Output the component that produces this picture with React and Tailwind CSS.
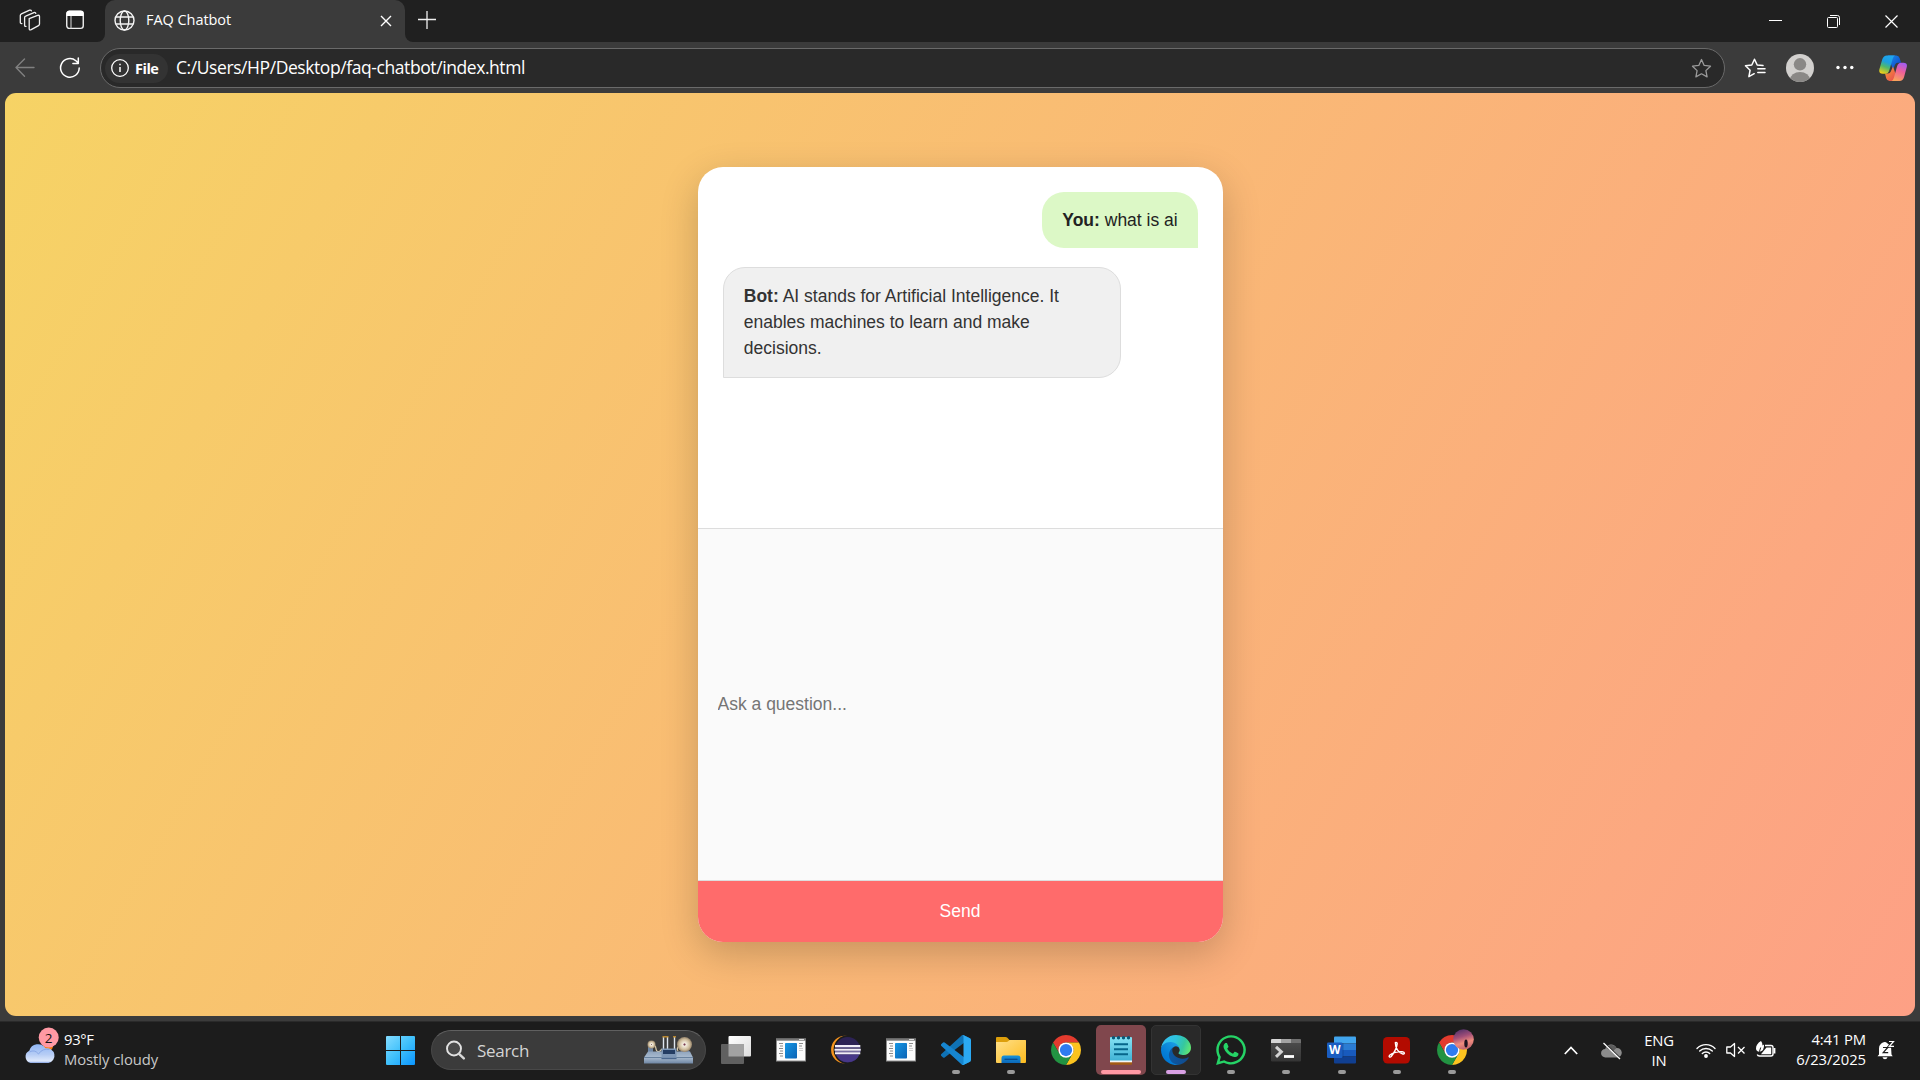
import React from "react";
import { FaWhatsapp } from "react-icons/fa";

const UI = "font-['Open_Sans','Noto_Sans',sans-serif]";

/* ---------- Browser chrome ---------- */

function WorkspacesIcon() {
  return (
    <svg width="22" height="22" viewBox="0 0 22 22" fill="none" stroke="#f0f0f0" strokeWidth="1.3" strokeLinejoin="round" strokeLinecap="round">
      <path d="M10.2 9.6 18.6 6.4q1.9-.6 1.9 1.1v7.6q0 1-1 1.5l-7.3 4q-2 .9-2-.9v-8.6q0-1.100 0-1.500z" />
      <path d="M7 17.300q-1.400.300-1.400-1.100V8.700q0-1.200 1.100-1.600l8.200-3.500q1.600-.5 1.900.8" />
      <path d="M2.900 14.600q-1.600.100-1.600-1.200V6.500q0-1.200 1.100-1.700L10.600 1.200q1.500-.4 1.800.7" />
    </svg>
  );
}

function TabActionsIcon() {
  return (
    <svg width="18" height="20" viewBox="0 0 18 20" fill="none">
      <rect x=".75" y="1.200" width="16.500" height="17.200" rx="2.600" stroke="#f0f0f0" strokeWidth="1.400" />
      <path d="M.5 6V3.300Q.5.700 3.200.700h11.600q2.700 0 2.700 2.600V6z" fill="#fff" />
      <path d="M5 6v12.300" stroke="#bdbdbd" strokeWidth="1.200" />
    </svg>
  );
}

function GlobeIcon() {
  return (
    <svg width="21" height="21" viewBox="0 0 21 21" fill="none" stroke="#f4f4f4" strokeWidth="1.400">
      <circle cx="10.500" cy="10.500" r="9.500" />
      <ellipse cx="10.500" cy="10.500" rx="4.300" ry="9.500" />
      <path d="M1.800 7h17.400M1.800 14h17.400" />
    </svg>
  );
}

function TitleBar() {
  return (
    <div className="flex h-[42px] bg-[#202020]">
      <div className="flex w-[105px] items-start bg-[#3b3b3b]">
        <div className="flex h-[42px] w-full items-start rounded-br-[8px] bg-[#202020] pl-[19px] pt-[9px]">
          <WorkspacesIcon />
          <div className="pl-[25px] pt-[1px]"><TabActionsIcon /></div>
        </div>
      </div>
      <div className="flex w-[300px] bg-[#202020]">
        <div className="flex h-[42px] w-full items-start rounded-t-[10px] bg-[#3b3b3b] pl-[8.500px] pr-[13.500px]">
          <div className="pt-[10px]"><GlobeIcon /></div>
          <span className="ml-[11.500px] mt-[9px] text-[14.500px] leading-[21px] tracking-[-0.05px] text-white">FAQ Chatbot</span>
          <svg className="ml-auto mt-[15px]" width="12" height="12" viewBox="0 0 12 12" stroke="#fff" strokeWidth="1.400"><path d="M1 1l10 10M11 1 1 11" /></svg>
        </div>
      </div>
      <div className="flex flex-1 bg-[#3b3b3b]">
        <div className="flex h-[42px] w-full items-start rounded-bl-[8px] bg-[#202020]">
          <svg className="ml-[13px] mt-[11px]" width="18" height="18" viewBox="0 0 18 18" stroke="#f0f0f0" strokeWidth="1.300"><path d="M9 0v18M0 8.500h18" /></svg>
          <svg className="ml-auto mt-[14px]" width="13" height="14" viewBox="0 0 13 14" stroke="#fff" strokeWidth="1"><path d="M0 6.500h13" /></svg>
          <svg className="ml-[45px] mt-[15px]" width="13" height="13" viewBox="0 0 13 13" fill="none" stroke="#fff" strokeWidth="1">
            <rect x=".5" y="2.500" width="10" height="10" rx="1" /><path d="M3 .5h7.500q2 0 2 2V10" />
          </svg>
          <svg className="ml-[45px] mr-[22px] mt-[15px]" width="13" height="13" viewBox="0 0 13 13" stroke="#fff" strokeWidth="1.200"><path d="M.5.5l12 12M12.500.5l-12 12" /></svg>
        </div>
      </div>
    </div>
  );
}

function Copilot() {
  return (
    <svg width="28" height="27" viewBox="0 0 28 27">
      <defs>
        <linearGradient id="cpA" x1=".6" y1="0" x2=".25" y2="1"><stop offset="0" stopColor="#1fa5ee" /><stop offset=".35" stopColor="#1c9fe0" /><stop offset=".62" stopColor="#4fb86a" /><stop offset="1" stopColor="#f4cf16" /></linearGradient>
        <linearGradient id="cpB" x1=".7" y1="0" x2=".35" y2="1"><stop offset="0" stopColor="#a35cf0" /><stop offset=".45" stopColor="#ef5f9a" /><stop offset="1" stopColor="#f9a45a" /></linearGradient>
        <linearGradient id="cpC" x1="0" y1="0" x2="1" y2="1"><stop offset="0" stopColor="#1c8eea" /><stop offset="1" stopColor="#0a3bc4" /></linearGradient>
        <linearGradient id="cpD" x1="0" y1="0" x2="1" y2="1"><stop offset="0" stopColor="#f7a032" /><stop offset="1" stopColor="#e53f55" /></linearGradient>
      </defs>
      <path d="M9 .5h8.200q2.700 0 3.500 2.700l1.300 4.500h-3.200q-2 0-2.800 2l-2 5z" fill="url(#cpC)" />
      <path d="M19 26H10.500Q8 26 7.200 23.300L6 18.600h3q2.100 0 2.800-2l2.200-5z" fill="url(#cpD)" />
      <path d="M8 .5h8q-1.500.5-2.300 3.200l-3.400 11.500q-1 3.600-4 3.600H3.700q-4.300 0-3.300-4.500L3.300 4.300Q4.500.5 8 .5z" fill="url(#cpA)" />
      <path d="M20.500 26h-8q1.600-.5 2.400-3.200l3.200-11.500q1-3.500 4-3.500h2.400q4.300 0 3.200 4.500l-2.700 10Q24 26 20.500 26z" fill="url(#cpB)" />
    </svg>
  );
}

const STAR = "M10.500 1.500l2.700 5.900 6.300.8-4.600 4.400 1.200 6.300-5.600-3.100-5.600 3.100 1.200-6.300L1.500 8.200l6.300-.8z";

function Toolbar() {
  return (
    <div className="flex h-[51px] items-start bg-[#3b3b3b] pt-[6px]">
      <svg className="ml-[15px] mt-[10px]" width="20" height="20" viewBox="0 0 20 20" fill="none" stroke="#808080" strokeWidth="1.400" strokeLinecap="round" strokeLinejoin="round"><path d="M19 9.500H1M9.500 1 1 9.500l8.500 8.700" /></svg>
      <svg className="ml-[24px] mt-[9px]" width="22" height="22" viewBox="0 0 22 22" fill="none" stroke="#fff" strokeWidth="1.500" strokeLinecap="round" strokeLinejoin="round"><path d="M20.200 11a9.300 9.300 0 1 1-3.300-7.200L19.200 6M19.300 1v5.400h-5.400" /></svg>
      <div className="ml-[19px] flex h-[40px] w-[1625px] items-center rounded-full border border-[#6a6a6a] bg-[#292929] pl-[4px] pr-[12.500px]">
        <div className="flex h-[29px] w-[63px] items-center rounded-full bg-[#333333] pl-[6px]">
          <svg width="18" height="18" viewBox="0 0 18 18" fill="none" stroke="#fff" strokeWidth="1.300"><circle cx="9" cy="9" r="8.300" /><path d="M9 8v5M9 4.800v1.500" strokeWidth="1.500" /></svg>
          <span className="ml-[6px] mt-[1px] text-[14.500px] font-bold leading-[20px] tracking-[-0.5px] text-white">File</span>
        </div>
        <span className="ml-[8px] mt-[-2px] text-[17.500px] leading-[24px] tracking-[-0.42px] text-white">C:/Users/HP/Desktop/faq-chatbot/index.html</span>
        <svg className="ml-auto" width="21" height="21" viewBox="0 0 21 21" fill="none" stroke="#9a9a9a" strokeWidth="1.300" strokeLinejoin="round"><path d={STAR} /></svg>
      </div>
      <svg className="ml-[19px] mt-[10px]" width="22" height="21" viewBox="0 0 22 21" fill="none" stroke="#fff" strokeWidth="1.500" strokeLinejoin="round" strokeLinecap="round">
        <path d="M19 7.600l-5.800-.6L10.500 1.300 7.800 7l-6.300.8 4.600 4.400-1.200 6.500 5.300-3" />
        <path d="M13.800 10.700H21M13.800 14.600H21" />
      </svg>
      <svg className="ml-[20px] mt-[6px]" width="28" height="28" viewBox="0 0 28 28">
        <clipPath id="avatar"><circle cx="14" cy="14" r="14" /></clipPath>
        <g clipPath="url(#avatar)"><rect width="28" height="28" fill="#d2d0ce" /><circle cx="14" cy="10.300" r="6.200" fill="#8a8886" /><ellipse cx="14" cy="26" rx="10" ry="8" fill="#8a8886" /></g>
      </svg>
      <svg className="ml-[22px] mt-[17px]" width="18" height="5" viewBox="0 0 18 5" fill="#fff"><circle cx="2" cy="2.500" r="1.700" /><circle cx="9" cy="2.500" r="1.700" /><circle cx="15.800" cy="2.500" r="1.700" /></svg>
      <div className="ml-[25px] mt-[7px]"><Copilot /></div>
    </div>
  );
}

/* ---------- Page ---------- */

function ChatPage() {
  return (
    <div className="flex h-[928px] items-start bg-[#3b3b3b] px-[5px]">
      <div className="flex h-[923px] w-full justify-center rounded-[11px] bg-[linear-gradient(120deg,#f6d365,#fda085)] pt-[74px] font-['Liberation_Sans',Arial,sans-serif] text-[17.500px] leading-[26.250px]">
        <div className="ml-[1px] flex h-[775px] w-[525px] flex-col overflow-hidden rounded-[25px] bg-white shadow-[0_12px_38px_rgba(0,0,0,0.2)]">
          <div className="flex h-[362px] flex-col gap-[19px] border-b border-[#dddddd] px-[25px] pt-[25px]">
            <div className="self-end rounded-[22px] rounded-br-none bg-[#dcf8c6] py-[15px] pl-[20.500px] pr-[20.300px] text-[#222]"><b>You:</b> what is ai</div>
            <div className="h-[111px] w-[398px] self-start rounded-[22px] rounded-bl-none border border-[#dddddd] bg-[#f0f0f0] pl-[19.800px] pr-[19px] pt-[14.700px] text-[#333]">
              <b>Bot:</b> AI stands for Artificial Intelligence. It enables machines to learn and make decisions.
            </div>
          </div>
          <input className="h-[352px] w-full border-b border-[#dddddd] bg-[#fafafa] px-[19.500px] text-[17.500px] outline-none placeholder:text-[#757575]" placeholder="Ask a question..." />
          <button className="flex-1 bg-[#ff6b6b] pb-[1px] pr-[1px] text-white">Send</button>
        </div>
      </div>
    </div>
  );
}

/* ---------- Taskbar ---------- */

function WeatherIcon() {
  return (
    <svg width="36" height="38" viewBox="0 0 36 38">
      <defs><linearGradient id="cl" x1="0" y1="0" x2="0" y2="1"><stop offset="0" stopColor="#8fb6f5" /><stop offset=".55" stopColor="#b7cdf5" /><stop offset=".9" stopColor="#dfe9fb" /><stop offset="1" stopColor="#7f9fe0" /></linearGradient></defs>
      <circle cx="24" cy="19" r="5" fill="#f57c14" />
      <path d="M6.500 36a6.500 6.500 0 0 1-1.200-12.200A9 9 0 0 1 21.500 21.300 7.500 7.500 0 0 1 24.500 36z" fill="url(#cl)" />
      <path d="M5.500 25q5-3 9 2 4-6 11-4.500" fill="none" stroke="#89a8e6" strokeWidth="1" />
      <circle cx="24.700" cy="10.500" r="10" fill="#ff99a4" />
      <text x="24.700" y="15.500" fontSize="13.500" textAnchor="middle" fill="#111" fontFamily="Open Sans">2</text>
    </svg>
  );
}

function WindowsLogo() {
  return (
    <svg width="29" height="29" viewBox="0 0 29 29">
      <defs><linearGradient id="win" gradientUnits="userSpaceOnUse" x1="0" y1="0" x2="29" y2="29"><stop offset="0" stopColor="#84dcff" /><stop offset=".5" stopColor="#3fc0fb" /><stop offset="1" stopColor="#0a95ff" /></linearGradient></defs>
      <path fill="url(#win)" d="M1 0h13v14H0V1q0-1 1-1zM15 0h13q1 0 1 1v13H15zM0 15h14v14H1q-1 0-1-1zM15 15h14v13q0 1-1 1H15z" />
    </svg>
  );
}

function MachineIcon() {
  return (
    <svg width="50" height="28" viewBox="0 0 50 28">
      <defs>
        <linearGradient id="mb" x1="0" y1="0" x2="0" y2="1"><stop offset="0" stopColor="#8fa4bd" /><stop offset=".5" stopColor="#a9bbcf" /><stop offset="1" stopColor="#6f86a3" /></linearGradient>
        <radialGradient id="md"><stop offset="0" stopColor="#8b6f75" /><stop offset=".2" stopColor="#f6efe2" /><stop offset=".7" stopColor="#cdbb9a" /><stop offset="1" stopColor="#94826a" /></radialGradient>
      </defs>
      <path d="M4 9.500h5v8H4z" fill="#6e86a4" /><path d="M5 7q7 1 7 6 1 4 4 2l2-2M34 15q-2-3 2-6" fill="none" stroke="#d8c9a8" strokeWidth="1.200" />
      <circle cx="7.500" cy="8.500" r="4" fill="url(#md)" />
      <path d="M19.500 1v13M23.500 1v13M30.500 1v13" stroke="#dfe6ee" strokeWidth="1.400" /><path d="M18.500.8h6M29 .8h3" stroke="#b7862f" strokeWidth="1.600" />
      <path d="M38 13h6l2 4H36z" fill="#53709a" />
      <path d="M4 15.500h42l3 6v6H0v-6z" fill="url(#mb)" /><path d="M0 21.500h49" stroke="#617a99" strokeWidth=".9" />
      <path d="M17.500 12.500h15v10h-15z" fill="#7d96b5" /><path d="M19 14h12v4H19z" fill="#243d63" /><path d="M17.500 22.500h15" stroke="#4a678d" strokeWidth="1.300" />
      <circle cx="40.500" cy="8.500" r="7.500" fill="url(#md)" /><circle cx="40.500" cy="8.500" r="1" fill="#7c3c52" />
    </svg>
  );
}

function SearchBox() {
  return (
    <div className="flex h-[40px] w-[275px] items-center rounded-full border border-[#484848] border-t-[#606060] bg-[#3b3b3b] pl-[14px] pr-[11px]">
      <svg width="20" height="20" viewBox="0 0 20 20" fill="none"><circle cx="8" cy="8.500" r="7" fill="#4a4a4a" stroke="#e2e2e2" strokeWidth="1.900" /><path d="M13 13.800l4.800 4.600" stroke="#d8d8d8" strokeWidth="2.400" strokeLinecap="round" /></svg>
      <span className="ml-[11px] mt-[1px] text-[17px] leading-[22px] tracking-[-0.3px] text-[#d4d4d4]">Search</span>
      <div className="ml-auto"><MachineIcon /></div>
    </div>
  );
}

function TaskView() {
  return (
    <svg width="30" height="29" viewBox="0 0 30 29">
      <defs><linearGradient id="tv" x1="0" y1="0" x2="1" y2="1"><stop offset="0" stopColor="#fff" /><stop offset="1" stopColor="#dcdcdc" /></linearGradient></defs>
      <rect x="7.500" y="0" width="22.500" height="20.500" rx="1" fill="url(#tv)" />
      <rect x="0" y="8" width="23" height="20" rx="1" fill="#606060" /><path d="M7.500 8H23v12.500H7.500z" fill="#a2a2a2" />
    </svg>
  );
}

function DocWindow() {
  return (
    <svg width="30" height="24" viewBox="0 0 30 24">
      <defs><linearGradient id="dw" x1="0" y1="0" x2="1" y2="1"><stop offset="0" stopColor="#1496e4" /><stop offset="1" stopColor="#0a62b4" /></linearGradient></defs>
      <rect x=".5" y="1" width="29" height="22" fill="#fbfbfb" stroke="#8f8f8f" /><path d="M0 .5h30v2.200H0z" fill="#777" /><path d="M23 1.500h5" stroke="#ddd" />
      <rect x="9" y="5" width="12" height="15.500" rx=".8" fill="url(#dw)" />
      <path d="M3 5.500h4M4 8h3M3 10.500h4M4 13h3M3 15.500h4M4 18h3M23 5.500h4M23 8h3" stroke="#8a8a8a" strokeWidth="1.200" /><path d="M23 10.500h4M23 12.500h4" stroke="#cfcfcf" />
    </svg>
  );
}

function Eclipse() {
  return (
    <svg width="30" height="30" viewBox="0 0 30 30">
      <path d="M13.500 1.200A13.700 13.700 0 0 0 13.500 28.200 15 15 0 0 1 13.500 1.200z" fill="#f7941e" />
      <circle cx="14" cy="14.700" r="13.900" fill="#f7941e" />
      <circle cx="17" cy="14.700" r="14.400" fill="#1c1c1c" />
      <circle cx="16.700" cy="14.700" r="12.700" fill="#2c2255" />
      <path d="M5 19.500h23.400A12.700 12.700 0 0 1 5 19.500z" fill="#473788" />
      <path d="M4 11h25.300M3.500 14.700h26.300M4 18.300h25.300" stroke="#f1edf8" strokeWidth="1.900" />
      <path d="M4 12.700h25.500M4 16.500h25.500" stroke="#8d84b8" strokeWidth=".8" />
    </svg>
  );
}

function VSCode() {
  return (
    <svg width="30" height="30" viewBox="0 0 100 100">
      <path fill="#0f72b5" d="M96.460 10.800L75.860.870a6.230 6.230 0 0 0-7.100 1.200L1.300 63.580a4.170 4.170 0 0 0 0 6.160l5.500 5.010a4.170 4.170 0 0 0 5.330.24L93.360 13.370a4.130 4.130 0 0 1 6.640 3.300v-.24a6.250 6.250 0 0 0-3.540-5.630z" />
      <path fill="#1685cf" d="M96.460 89.200l-20.600 9.930a6.230 6.230 0 0 1-7.100-1.200L1.300 36.420a4.170 4.170 0 0 1 0-6.160l5.500-5.010a4.170 4.170 0 0 1 5.330-.24l81.230 61.620a4.130 4.130 0 0 0 6.640-3.300v.24a6.250 6.250 0 0 1-3.540 5.630z" />
      <path fill="#2ba9f3" d="M75.860 99.130a6.230 6.230 0 0 1-7.100-1.200c2.300 2.300 6.250.67 6.250-2.600V4.670c0-3.270-3.950-4.900-6.260-2.600a6.230 6.230 0 0 1 7.100-1.200l20.600 9.900A6.250 6.250 0 0 1 100 16.400v67.200a6.250 6.250 0 0 1-3.540 5.630z" />
    </svg>
  );
}

function Folder() {
  return (
    <svg width="30" height="28" viewBox="0 0 30 28">
      <defs><linearGradient id="fo" x1="0" y1="0" x2="1" y2="1"><stop offset="0" stopColor="#ffe08a" /><stop offset="1" stopColor="#fdbb1d" /></linearGradient><linearGradient id="fb" x1="0" y1="0" x2="0" y2="1"><stop offset="0" stopColor="#1692dc" /><stop offset="1" stopColor="#0c68b8" /></linearGradient></defs>
      <path d="M0 2q0-1 1-1h8.500q1 0 1.600.6L13.500 4H29q1 0 1 1v6H0z" fill="#dd9f0b" />
      <path d="M0 6h10.500q1 0 1.700-.7L13.700 4H29q1 0 1 1v21q0 1-1 1H1q-1 0-1-1z" fill="url(#fo)" />
      <path d="M5.500 27v-5q0-2.500 2.500-2.500h14q2.500 0 2.500 2.500v5z" fill="url(#fb)" /><path d="M8.500 23.300h13" stroke="#08488a" strokeWidth="1.200" />
    </svg>
  );
}

function Chrome() {
  return (
    <svg width="30" height="30" viewBox="0 0 48 48">
      <path fill="#e33b2e" d="M3.220 12A24 24 0 0 1 44.780 12L24 12A12 12 0 0 0 13.610 30Z" />
      <path fill="#fcc31f" d="M44.780 12A24 24 0 0 1 24 48L34.390 30A12 12 0 0 0 24 12Z" />
      <path fill="#229342" d="M24 48A24 24 0 0 1 3.220 12L13.610 30A12 12 0 0 0 34.390 30Z" />
      <circle cx="24" cy="24" r="12.200" fill="#fff" /><circle cx="24" cy="24" r="9.800" fill="#2f7bf0" />
    </svg>
  );
}

function Notepad() {
  return (
    <svg width="22" height="30" viewBox="0 0 22 30">
      <defs><linearGradient id="np" x1="0" y1="0" x2="0" y2="1"><stop offset="0" stopColor="#86e2f3" /><stop offset="1" stopColor="#41b3d6" /></linearGradient></defs>
      <path d="M0 25h22v4q0 .8-1 .8H1q-1 0-1-.8z" fill="#a45c14" /><path d="M0 24h22v3.300H0z" fill="#f5f5f5" />
      <path d="M0 3q0-1 1-1h20q1 0 1 1v22.500H0z" fill="url(#np)" />
      <path d="M4 9.200h14M4 14.200h14M4 19.200h14" stroke="#06668a" strokeWidth="1.900" />
      <g fill="#075a7a"><circle cx="3.500" cy="2.700" r="1.700" /><circle cx="8.500" cy="2.700" r="1.700" /><circle cx="13.500" cy="2.700" r="1.700" /><circle cx="18.500" cy="2.700" r="1.700" /></g>
    </svg>
  );
}

function Edge() {
  return (
    <svg width="30" height="30" viewBox="0 0 256 256">
      <defs>
        <linearGradient id="ea" gradientUnits="userSpaceOnUse" x1="63" y1="178" x2="241" y2="178"><stop offset="0" stopColor="#0c59a4" /><stop offset="1" stopColor="#114a8b" /></linearGradient>
        <linearGradient id="eb" gradientUnits="userSpaceOnUse" x1="157" y1="100" x2="46" y2="221"><stop offset="0" stopColor="#1b9de2" /><stop offset=".16" stopColor="#1595df" /><stop offset=".67" stopColor="#0680d7" /><stop offset="1" stopColor="#0078d4" /></linearGradient>
        <linearGradient id="ec" gradientUnits="userSpaceOnUse" x1="20" y1="60" x2="255" y2="150"><stop offset="0" stopColor="#35c1f1" /><stop offset=".4" stopColor="#2dc3db" /><stop offset=".7" stopColor="#36c79e" /><stop offset="1" stopColor="#66eb6e" /></linearGradient>
      </defs>
      <g transform="translate(-4.630 -4.920)">
        <path fill="url(#ea)" d="M235.680 195.460a93.730 93.730 0 0 1-10.540 4.710 101.870 101.870 0 0 1-35.900 6.460c-47.320 0-88.540-32.550-88.540-74.320A31.480 31.480 0 0 1 117.130 105c-42.800 1.800-53.800 46.400-53.800 72.530 0 73.880 68.090 81.370 82.760 81.370 7.910 0 19.840-2.300 27-4.560l1.310-.44a128.340 128.340 0 0 0 66.600-52.800 4 4 0 0 0-5.320-5.640z" />
        <path fill="url(#eb)" d="M110.340 246.340A79.200 79.200 0 0 1 87.600 225a80.720 80.720 0 0 1 29.530-120c3.120-1.470 8.450-4.130 15.540-4a32.350 32.350 0 0 1 25.690 13 31.880 31.880 0 0 1 6.360 18.660c0-.21 24.460-79.600-80-79.600-43.900 0-80 41.660-80 78.210a130.150 130.150 0 0 0 12.110 56 128 128 0 0 0 156.380 67.110 75.550 75.550 0 0 1-62.780-8z" />
        <path fill="url(#ec)" d="M156.940 153.780c-.81 1.050-3.300 2.500-3.300 5.660 0 2.610 1.700 5.120 4.720 7.230 14.380 10 41.490 8.680 41.560 8.680a59.560 59.560 0 0 0 30.270-8.350 61.380 61.380 0 0 0 30.430-52.880c.26-22.410-8-37.310-11.340-43.910C228.090 28.760 182.350 5 132.610 5a128 128 0 0 0-128 126.200c.48-36.540 36.800-66.050 80-66.050 3.500 0 23.460.34 42 10.070 16.340 8.580 24.900 18.940 30.850 29.210 6.180 10.670 7.280 24.150 7.280 29.520s-2.740 13.330-7.800 19.830z" />
      </g>
    </svg>
  );
}

function Terminal() {
  return (
    <svg width="30" height="24" viewBox="0 0 30 24">
      <defs><linearGradient id="tm" x1="0" y1="0" x2="0" y2="1"><stop offset="0" stopColor="#505050" /><stop offset="1" stopColor="#343434" /></linearGradient></defs>
      <rect y="1" width="30" height="22.500" rx="1.300" fill="url(#tm)" />
      <path d="M1.300 1H10v4H0V2.300Q0 1 1.300 1z" fill="#d5d5d5" /><path d="M10 1h10v4H10z" fill="#a3a3a3" /><path d="M20 1h8.700Q30 1 30 2.300V5H20z" fill="#707070" />
      <path d="M5 8.800l5.300 5-5.300 5" fill="none" stroke="#d2d2d2" strokeWidth="3" /><path d="M13 18.500h10" stroke="#fff" strokeWidth="2.800" />
    </svg>
  );
}

function Word() {
  return (
    <svg width="29" height="28" viewBox="0 0 29 28">
      <path d="M7 7.500V1.500Q7 .5 8 .5h20q1 0 1 1v6z" fill="#41a5ee" /><path d="M7 7.500h22V14H7z" fill="#2b7cd3" /><path d="M7 14h22v6.500H7z" fill="#185abd" /><path d="M7 20.500h22v6q0 1-1 1H8q-1 0-1-1z" fill="#103f91" />
      <path d="M7 7h9.500v15H7z" fill="#0b2f6b" opacity=".35" />
      <rect x="0" y="6.500" width="15.500" height="15.500" rx="1.200" fill="#1a5dc0" />
      <text x="7.700" y="18.300" fontSize="12" fontWeight="700" textAnchor="middle" fill="#fff" fontFamily="Open Sans">W</text>
    </svg>
  );
}

function Acrobat() {
  return (
    <svg width="27" height="27" viewBox="0 0 27 27">
      <rect width="27" height="26.500" rx="4.500" fill="#b30b00" />
      <path d="M12.400 6.200c-.6-1 1.900-1.400 1.800.5-.200 4-3.700 10.300-6 12.800-1.500 1.500-3-.1-1.300-1.500 2.400-2 8.300-3.700 12.300-3.300 3 .3 2.700 2.600.5 2.300-3.400-.5-7.300-5.400-7.300-10.800z" fill="none" stroke="#fff" strokeWidth="1.400" />
    </svg>
  );
}

function Slot({ children, run, className = "" }) {
  return (
    <div className={"relative flex h-[50px] w-[50px] items-center justify-center rounded-[5px] " + className}>
      {children}
      {run && <span className={"absolute h-[4px] rounded-full " + run} />}
    </div>
  );
}

const GREY = "bottom-[1px] w-[8px] bg-[#9a9a9a]";

function Taskbar() {
  return (
    <div className={"flex h-[59px] items-start border-t border-[#2a2a2a] bg-[#1c1c1c] pt-[3px] " + UI}>
      <div className="flex w-[376px] items-start pl-[24px]">
        <div className="mt-[2px]"><WeatherIcon /></div>
        <div className="ml-[4px] mt-[4px] text-[14.800px] leading-[20px] text-white">
          <div className="tracking-[-0.3px]">93°F</div><div className="tracking-[-0.05px] text-[#c8c8c8]">Mostly cloudy</div>
        </div>
      </div>
      <div className="flex items-center gap-[5px]">
        <Slot className="pr-[2px]"><WindowsLogo /></Slot>
        <SearchBox />
        <Slot><TaskView /></Slot>
        <Slot><DocWindow /></Slot>
        <Slot><Eclipse /></Slot>
        <Slot><DocWindow /></Slot>
        <Slot run={GREY}><VSCode /></Slot>
        <Slot run={GREY}><Folder /></Slot>
        <Slot><Chrome /></Slot>
        <Slot className="bg-[#80474d]" run="bottom-[1px] w-[40px] bg-[#ff99a4]"><Notepad /></Slot>
        <Slot className="border border-[#333] bg-[#292929]" run="bottom-0 w-[20px] bg-[#d8a0e4]"><Edge /></Slot>
        <Slot run={GREY}><FaWhatsapp size={34} color="#25d366" /></Slot>
        <Slot run={GREY}><Terminal /></Slot>
        <div className="flex gap-[5px] pl-[1px]">
          <Slot className="pr-[1px]" run={GREY}><Word /></Slot>
          <Slot className="pr-[1px]" run={GREY}><Acrobat /></Slot>
          <Slot run={GREY}>
            <Chrome />
            <svg className="absolute left-[26px] top-[4px]" width="21" height="21" viewBox="0 0 21 21">
              <defs><linearGradient id="pf" x1="0" y1="0" x2=".3" y2="1"><stop offset="0" stopColor="#3e2a66" /><stop offset=".45" stopColor="#a24f78" /><stop offset=".75" stopColor="#f08c7e" /><stop offset="1" stopColor="#c76a70" /></linearGradient></defs>
              <circle cx="10.500" cy="10.500" r="10.300" fill="url(#pf)" /><ellipse cx="13" cy="14.500" rx="1.700" ry="4" fill="#1d1220" />
            </svg>
          </Slot>
        </div>
      </div>
      <div className="ml-auto flex h-[50px] items-center text-[14.800px] leading-[20px] text-white">
        <svg width="14" height="9" viewBox="0 0 14 9" fill="none" stroke="#fff" strokeWidth="1.700"><path d="M.8 8 7 1.500 13.200 8" /></svg>
        <svg className="ml-[23px] mt-[2px]" width="21" height="18" viewBox="0 0 21 18">
          <path d="M4.500 15.500a4.300 4.300 0 0 1-.3-8.600A6 6 0 0 1 15.500 6a4.700 4.700 0 0 1 1 9.500z" fill="#8c8c8c" /><path d="M5 6a6 6 0 0 1 10.500 0l-4 3.500z" fill="#5c5c5c" />
          <path d="M3.500 1l16.500 16" stroke="#1c1c1c" strokeWidth="1.500" /><path d="M2.500 1l16.500 16" stroke="#fff" strokeWidth="1.300" />
        </svg>
        <div className="ml-[22px] w-[30px] text-center tracking-[-0.2px]"><div>ENG</div><div>IN</div></div>
        <svg className="ml-[22px]" width="20" height="16" viewBox="0 0 20 16" fill="none" stroke="#fff" strokeWidth="1.400" strokeLinecap="round">
          <path d="M1 6.500a12.500 12.500 0 0 1 18 0M3.700 9a9 9 0 0 1 12.600 0M6.300 11.600a5.200 5.200 0 0 1 7.400 0" /><circle cx="10" cy="14" r="1.200" fill="#fff" />
        </svg>
        <svg className="ml-[10px]" width="20" height="16" viewBox="0 0 20 16" fill="none" stroke="#fff" strokeWidth="1.300" strokeLinejoin="round"><path d="M8.500 1.500v13L4.500 11H.8V5h3.700z" /><path d="M12 5l6.500 6.500M18.500 5 12 11.500" /></svg>
        <svg className="ml-[9px] mt-[-2px]" width="21" height="18" viewBox="0 0 21 18" fill="none" stroke="#fff" strokeWidth="1.400">
          <path d="M10 5.500h6q2 0 2 2v6.500q0 2-2 2H4.500q-1.800 0-2.200-1.500" /><path d="M18.500 9h1v3.500h-1" strokeWidth="1.800" />
          <path d="M11.500 7.500h4.700v6.700H6z" fill="#fff" stroke="none" /><path d="M6 1Q1 4 1 8.500q0 3 3.500 3.300Q9.500 11 9 4.500L7.500 5.500Q7.500 2.500 6 1z" fill="#fff" stroke="none" /><path d="M2 14q3-1.500 3.700-6.500" stroke="#1c1c1c" strokeWidth="1" />
        </svg>
        <div className="ml-[20px] mt-[-2px] w-[70px] whitespace-nowrap text-right"><div className="tracking-[-0.1px]">4:41 PM</div><div className="tracking-[-0.05px]">6/23/2025</div></div>
        <svg className="ml-[11px] mr-[25px]" width="18" height="20" viewBox="0 0 18 20">
          <path d="M2 14.500V8.500a6 6 0 0 1 7-6.300l5 4 .5 8.300 1.200 1.700H.5z" fill="#fff" /><path d="M5.500 17.300h5q-.5 2-2.500 2t-2.500-2z" fill="#fff" />
          <path d="M6 7.500h4.700L6.200 12.700h5" fill="none" stroke="#1c1c1c" strokeWidth="1.200" /><path d="M12 1.500h4.500L12.300 6.300H17" fill="none" stroke="#1c1c1c" strokeWidth="2.800" /><path d="M12 1.500h4.500L12.300 6.300H17" fill="none" stroke="#fff" strokeWidth="1.200" />
        </svg>
      </div>
    </div>
  );
}

export default function App() {
  return (
    <div className={"flex h-[1080px] w-[1920px] flex-col overflow-hidden bg-[#3b3b3b] " + UI}>
      <TitleBar />
      <Toolbar />
      <ChatPage />
      <Taskbar />
    </div>
  );
}
